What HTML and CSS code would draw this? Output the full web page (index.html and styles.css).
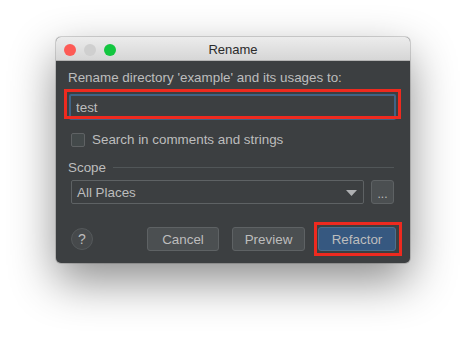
FILE: index.html
```html
<!DOCTYPE html>
<html lang="en">
<head>
  <meta charset="UTF-8" />
  <title>Rename</title>
  <link rel="stylesheet" href="styles.css">
</head>
<body>

  <div class="window">
    <div class="titlebar">
      <div class="lights">
        <span class="light red"></span>
        <span class="light gray"></span>
        <span class="light green"></span>
      </div>
      <div class="title">Rename</div>
    </div>

    <div class="content">
      <div class="prompt">Rename directory 'example' and its usages to:</div>

      <div class="field">
        <input type="text" class="name-input" value="test" />
        <div class="mark mark-input"></div>
      </div>

      <label class="check-row">
        <span class="checkbox"></span>
        <span>Search in comments and strings</span>
      </label>

      <div class="scope-title">
        <span>Scope</span>
        <span class="rule"></span>
      </div>

      <div class="scope-row">
        <div class="combo">
          <span>All Places</span>
          <svg class="arrow" width="11" height="6" viewBox="0 0 11 6"><path d="M0 0 L11 0 L5.5 6 Z" fill="#aeb0b2"/></svg>
        </div>
        <button class="btn dots">...</button>
      </div>

      <div class="actions">
        <span class="help">?</span>
        <div class="buttons">
          <button class="btn">Cancel</button>
          <button class="btn">Preview</button>
          <div class="primary-wrap">
            <button class="btn primary">Refactor</button>
            <div class="mark mark-button"></div>
          </div>
        </div>
      </div>
    </div>
  </div>

</body>
</html>
```

FILE: styles.css
```css
html {
  background: #ffffff;
}

body {
  margin: 0;
  min-height: 337px;
  box-sizing: border-box;
  padding: 37px 0 0 56px;
  font-family: "Liberation Sans", Arial, sans-serif;
  font-size: 13px;
}

.window {
  width: 354px;
  height: 226px;
  border-radius: 5px;
  background: #3c3f41;
  box-shadow: 0 18px 46px rgba(0, 0, 0, 0.45), 0 0 0 1px rgba(0, 0, 0, 0.15);
  display: flex;
  flex-direction: column;
}

.titlebar {
  height: 23px;
  background: linear-gradient(#ececec, #d6d6d6);
  border-bottom: 1px solid #b4b4b4;
  border-radius: 5px 5px 0 0;
  display: flex;
  align-items: center;
  position: relative;
}

.lights {
  display: flex;
  gap: 8px;
  padding-left: 8px;
  padding-top: 2px;
}

.light {
  width: 12px;
  height: 12px;
  border-radius: 50%;
}

.red { background: #fd5b56; }
.gray { background: #cfcfcf; }
.green { background: #13c640; }

.title {
  position: absolute;
  left: 0;
  right: 0;
  top: 5px;
  text-align: center;
  color: #2b2b2b;
  font-size: 13px;
}

.content {
  padding: 9px 14px 0 12px;
  color: #bdbdbd;
}

.prompt {
  line-height: 16px;
  font-size: 13.4px;
}

.field {
  position: relative;
  margin: 8px 0 0 1px;
}

.name-input {
  display: block;
  box-sizing: border-box;
  width: 327px;
  height: 26px;
  margin: 0;
  padding: 1px 5px 0;
  background: #3c3f41;
  border: 2px solid #3f6386;
  border-radius: 2px;
  color: #bdbdbd;
  font-family: inherit;
  font-size: 13.4px;
  outline: none;
}

.mark {
  position: absolute;
  border: 3px solid #ee2a1f;
  box-sizing: border-box;
}

.mark-input {
  left: -5px;
  right: -5px;
  top: -5px;
  bottom: 1px;
}

.check-row {
  display: flex;
  align-items: center;
  gap: 7px;
  margin: 12px 0 0 3px;
  font-size: 13.4px;
}

.checkbox {
  width: 12px;
  height: 12px;
  border: 1px solid #5f6264;
  border-radius: 2px;
  background: #43494a;
}

.scope-title {
  display: flex;
  align-items: center;
  gap: 7px;
  margin-top: 13px;
  font-size: 13.4px;
}

.rule {
  flex: 1;
  height: 1px;
  background: #515658;
  margin-right: 2px;
}

.scope-row {
  display: flex;
  gap: 7px;
  margin: 5px 0 0 3px;
}

.combo {
  box-sizing: border-box;
  width: 293px;
  height: 24px;
  border: 1px solid #5e6264;
  border-radius: 2px;
  display: flex;
  align-items: center;
  justify-content: space-between;
  padding: 0 6px 0 5px;
  font-size: 13.4px;
}

.arrow {
  margin-top: 1px;
}

.btn {
  box-sizing: border-box;
  height: 24px;
  border: 1px solid #5e6264;
  border-radius: 3px;
  background: #4b4f51;
  color: #bdbdbd;
  font-family: inherit;
  font-size: 13.4px;
  padding: 0;
}

.dots {
  width: 23px;
  line-height: 16px;
  padding-top: 4px;
  font-size: 12px;
}

.actions {
  display: flex;
  align-items: center;
  justify-content: space-between;
  margin: 23px 0 0 3px;
}

.help {
  box-sizing: border-box;
  width: 22px;
  height: 22px;
  border-radius: 50%;
  border: 1px solid #55595b;
  background: #46494b;
  color: #bdbdbd;
  font-size: 14px;
  display: flex;
  align-items: center;
  justify-content: center;
}

.buttons {
  display: flex;
  gap: 13px;
}

.buttons .btn {
  width: 72px;
}

.buttons .btn:nth-child(2) {
  width: 73px;
}

.primary-wrap {
  position: relative;
}

.buttons .primary {
  width: 78px;
  background: #365880;
  border-color: #4c708c;
}

.mark-button {
  left: -4px;
  right: -6px;
  top: -5px;
  bottom: -5px;
}
```
